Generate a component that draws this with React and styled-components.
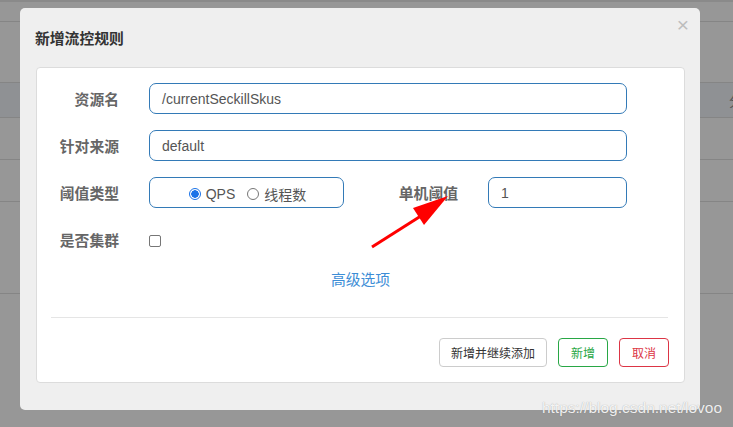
import React from "react";
import styled, { createGlobalStyle } from "styled-components";

const Global = createGlobalStyle`
  html, body { margin: 0; padding: 0; }
  body {
    width: 733px; height: 427px; overflow: hidden;
    background: #979797;
    font-family: "Liberation Sans", Arial, "Noto Sans CJK SC", sans-serif;
  }
`;

const Page = styled.div`
  position: relative;
  width: 733px;
  height: 427px;
  overflow: hidden;
  background: #979797;
`;

const BgTable = styled.div`
  display: flex;
  flex-direction: column;
  border-top: 2px solid #8a8a8a;
`;

const BgRow = styled.div`
  height: ${(p) => p.h}px;
  border-bottom: 1px solid #858585;
  background: ${(p) => (p.tint ? "#8f9194" : "transparent")};
  display: flex;
  align-items: center;
  justify-content: flex-end;
  color: #555;
  font-size: 14px;
  font-family: "Noto Sans CJK SC", sans-serif;
`;

const BgHead = styled.span`
  margin-right: -10px;
`;

const Modal = styled.div`
  position: absolute;
  left: 20px;
  top: 8px;
  width: 680px;
  height: 402px;
  box-sizing: border-box;
  background: #efefef;
  border-radius: 5px;
  padding: 0 15px 0 16px;
  display: flex;
  flex-direction: column;
`;

const Header = styled.div`
  height: 59px;
  display: flex;
  align-items: center;
  justify-content: space-between;
`;

const Title = styled.div`
  font-family: "Noto Sans CJK SC", sans-serif;
  font-weight: bold;
  font-size: 14.8px;
  color: #333;
  margin-left: -1px;
`;

const Close = styled.span`
  position: absolute;
  right: 11px;
  top: 5px;
  font-size: 21px;
  color: #bdbdbd;
  font-family: "Liberation Sans", Arial, sans-serif;
`;

const Card = styled.div`
  width: 649px;
  height: 316px;
  box-sizing: border-box;
  background: #fff;
  border: 1px solid #dcdcdc;
  border-radius: 4px;
  padding: 15px 15px 0 14px;
  display: flex;
  flex-direction: column;
`;

const Form = styled.div`
  display: flex;
  flex-direction: column;
  gap: 16px;
  padding-right: 42px;
`;

const Row = styled.div`
  display: flex;
  align-items: center;
  height: 31px;
`;

const Label = styled.label`
  width: ${(p) => p.w || 68}px;
  flex: ${(p) => (p.grow ? 1 : "none")};
  margin-right: 30px;
  text-align: right;
  font-family: "Noto Sans CJK SC", sans-serif;
  font-weight: bold;
  font-size: 14.8px;
  color: #666;
  white-space: nowrap;
`;

const Input = styled.div`
  box-sizing: border-box;
  height: 31px;
  width: ${(p) => (p.w ? p.w + "px" : "auto")};
  flex: ${(p) => (p.w ? "none" : 1)};
  border: 1px solid #337ab7;
  border-radius: 7px;
  padding: 0 12px;
  display: flex;
  align-items: center;
  font-size: 14px;
  color: #555;
`;

const RadioBox = styled(Input)`
  justify-content: center;
  padding: 3px 0 0 2px;
`;

const RadioItem = styled.span`
  display: inline-flex;
  align-items: center;
  margin-right: ${(p) => p.mr || 0}px;
  font-family: "Liberation Sans", Arial, "Noto Sans CJK SC", sans-serif;
  font-size: 14px;
  color: #555;
`;

const RadioDot = styled.span`
  box-sizing: border-box;
  width: 12px;
  height: 12px;
  border-radius: 50%;
  margin-right: 5px;
  border: ${(p) => (p.on ? "1px solid #1a73e8" : "1px solid #767676")};
  background: ${(p) => (p.on ? "radial-gradient(circle, #1a73e8 0 3.5px, #fff 4px)" : "#fff")};
`;

const Check = styled.span`
  box-sizing: border-box;
  width: 12px;
  height: 12px;
  border: 1px solid #767676;
  border-radius: 2px;
  background: #fff;
  margin-top: 3px;
`;

const LinkRow = styled.div`
  display: flex;
  justify-content: center;
  margin-top: 13px;
  padding-left: 1px;
`;

const Link = styled.a`
  font-family: "Noto Sans CJK SC", sans-serif;
  font-size: 14.8px;
  color: #3c8dd6;
  text-decoration: none;
`;

const Divider = styled.div`
  height: 1px;
  background: #e5e5e5;
  margin: 28px 1px 0 0;
`;

const Footer = styled.div`
  display: flex;
  justify-content: flex-end;
  gap: 11px;
  margin-top: 20px;
`;

const Btn = styled.button`
  box-sizing: border-box;
  height: 29px;
  padding: 0 ${(p) => p.px || 12}px;
  background: #fff;
  border: 1px solid ${(p) => p.c};
  border-radius: 4px;
  color: ${(p) => p.tc};
  font-family: "Noto Sans CJK SC", sans-serif;
  font-size: 12px;
`;

const Watermark = styled.div`
  position: absolute;
  right: 11px;
  top: 399px;
  font-family: "Liberation Sans", Arial, sans-serif;
  font-size: 15.5px;
  color: rgba(255, 255, 255, 0.88);
  text-shadow: 0 0 1px rgba(110, 110, 110, 0.6);
`;

const ArrowSvg = styled.svg`
  position: absolute;
  left: 0;
  top: 0;
  pointer-events: none;
`;

export default function App() {
  return (
    <Page>
      <Global />
      <BgTable>
        <BgRow h={19} />
        <BgRow h={60} />
        <BgRow h={34} tint>
          <BgHead>分</BgHead>
        </BgRow>
        <BgRow h={41} />
        <BgRow h={41} />
        <BgRow h={91} />
      </BgTable>

      <Modal>
        <Header>
          <Title>新增流控规则</Title>
          <Close>×</Close>
        </Header>
        <Card>
          <Form>
            <Row>
              <Label>资源名</Label>
              <Input>/currentSeckillSkus</Input>
            </Row>
            <Row>
              <Label>针对来源</Label>
              <Input>default</Input>
            </Row>
            <Row>
              <Label>阈值类型</Label>
              <RadioBox w={195}>
                <RadioItem mr={12}>
                  <RadioDot on />
                  QPS
                </RadioItem>
                <RadioItem>
                  <RadioDot />
                  线程数
                </RadioItem>
              </RadioBox>
              <Label grow>单机阈值</Label>
              <Input w={139}>1</Input>
            </Row>
            <Row>
              <Label>是否集群</Label>
              <Check />
            </Row>
          </Form>
          <LinkRow>
            <Link href="#">高级选项</Link>
          </LinkRow>
          <Divider />
          <Footer>
            <Btn c="#ccc" tc="#333" px={11}>新增并继续添加</Btn>
            <Btn c="#28a745" tc="#28a745">新增</Btn>
            <Btn c="#dc3545" tc="#dc3545">取消</Btn>
          </Footer>
        </Card>
      </Modal>

      <ArrowSvg width="733" height="427" viewBox="0 0 733 427">
        <line x1="372" y1="247" x2="424" y2="214" stroke="#ff0000" strokeWidth="3" />
        <polygon points="448,196 413,208 424,225" fill="#ff0000" />
      </ArrowSvg>

      <Watermark>https://blog.csdn.net/lovoo</Watermark>
    </Page>
  );
}
